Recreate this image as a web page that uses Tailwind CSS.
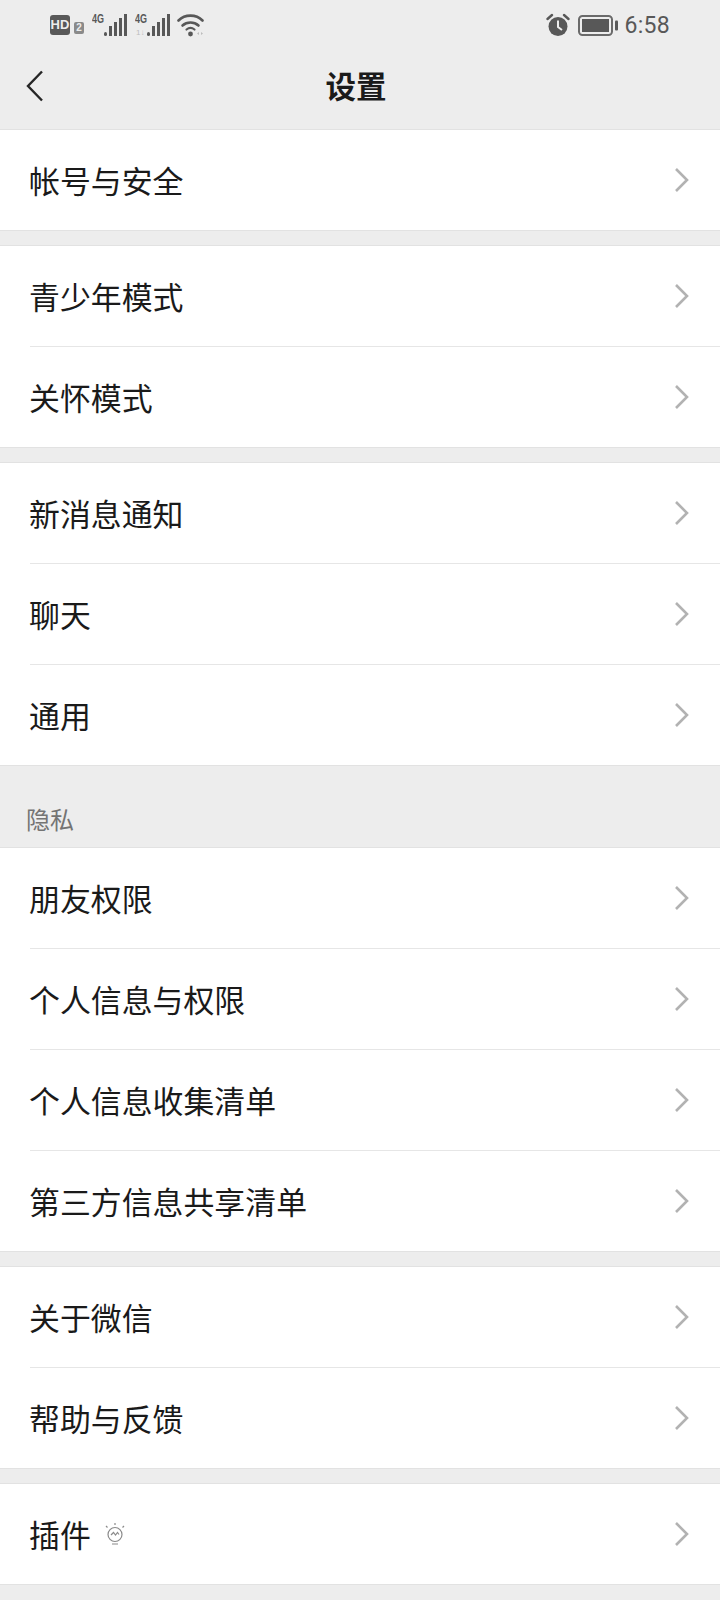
<!DOCTYPE html>
<html lang="zh-CN">
<head>
<meta charset="utf-8">
<script src="https://cdn.jsdelivr.net/npm/@tailwindcss/browser@4"></script>
<title>设置</title>
</head>
<body class="w-[720px] h-[1600px] overflow-hidden bg-[#ededed] font-['Noto_Sans_CJK_SC','Noto_Sans',sans-serif] text-[#1a1a1a]">
<!-- Status bar -->
<div class="h-[50px] flex items-center justify-between pl-[50px] pr-[50px] text-[#585858]">
  <div class="flex items-center">
    <span class="w-[20px] h-[20px] rounded-[3px] bg-[#585858] text-[#ededed] text-[13px] leading-[20px] font-bold text-center font-['Liberation_Sans']">HD</span>
    <span class="ml-[4px] mt-[6px] w-[10px] h-[12px] rounded-[2px] bg-[#8a8a8a] text-[#ededed] text-[10px] leading-[12px] font-bold text-center font-['Liberation_Sans']">2</span>
    <svg class="ml-[8px] -mt-[4px]" width="36" height="28" viewBox="0 -4 36 28" fill="#585858"><text x="0" y="10" font-family="Liberation Sans Narrow, Liberation Sans" font-size="13.5" font-weight="700" textLength="12" lengthAdjust="spacingAndGlyphs">4G</text><rect x="12" y="19" width="3" height="4" rx="1.5"/><rect x="17" y="13" width="3" height="10"/><rect x="22" y="9" width="3" height="14"/><rect x="27" y="5" width="3" height="18"/><rect x="32" y="1" width="3" height="22"/></svg>
    <svg class="ml-[7px] -mt-[4px]" width="36" height="28" viewBox="0 -4 36 28" fill="#585858"><text x="0" y="10" font-family="Liberation Sans Narrow, Liberation Sans" font-size="13.5" font-weight="700" textLength="12" lengthAdjust="spacingAndGlyphs">4G</text><text x="1" y="22" font-family="Liberation Sans" font-size="8" fill="#bdbdbd">1↓</text><rect x="12" y="19" width="3" height="4" rx="1.5"/><rect x="17" y="13" width="3" height="10"/><rect x="22" y="9" width="3" height="14"/><rect x="27" y="5" width="3" height="18"/><rect x="32" y="1" width="3" height="22"/></svg>
    <svg class="ml-[6px]" width="28" height="24" viewBox="0 0 28 24" fill="none" stroke="#585858" stroke-width="2.6" stroke-linecap="round"><path d="M1.5 7.5C8 1 19 1 25.5 7.5"/><path d="M5.5 12.5C10 8.5 17 8.5 21.5 12.5"/><path d="M9.5 16.5C12 14.5 15 14.5 17.5 16.5" stroke-width="2.2"/><circle cx="13.5" cy="21" r="2.4" fill="#585858" stroke="none"/><path d="M20 20.5l2-1.5v3zM24 19l2 1.5-2 1.5z" fill="#bdbdbd" stroke="none"/></svg>
  </div>
  <div class="flex items-center">
    <svg width="24" height="24" viewBox="0 0 24 24"><circle cx="12" cy="13.5" r="9.5" fill="#585858"/><path d="M12 7.5v6.5l4 3" fill="none" stroke="#ededed" stroke-width="2"/><path d="M1.5 6L6 2M22.5 6L18 2" stroke="#585858" stroke-width="2.4" stroke-linecap="round"/></svg>
    <svg class="ml-[8px]" width="40" height="21" viewBox="0 0 40 21"><rect x="1" y="1" width="33" height="19" rx="3.5" fill="none" stroke="#6a6a6a" stroke-width="2"/><rect x="4" y="4" width="27" height="13" fill="#585858"/><rect x="37" y="5.5" width="3" height="10" rx="1" fill="#585858"/></svg>
    <span class="ml-[6px] text-[23px] leading-none font-['Roboto'] tracking-[0.3px]">6:58</span>
  </div>
</div>
<!-- Nav bar -->
<header class="relative h-[80px] border-b border-[#e2e2e2] flex items-center justify-center">
  <svg class="absolute left-[26px] top-[20px]" width="18" height="32" viewBox="0 0 18 32" fill="none" stroke="#262626" stroke-width="2.4"><path d="M16 1.5L2 16l14 14.5"/></svg>
  <h1 class="text-[30.5px] leading-none font-bold -mt-[9px] -ml-[8px] text-[#1a1a1a]">设置</h1>
</header>
<main>
  <section class="bg-white border-b border-[#e2e2e2]">
    <a class="h-[100px] ml-[30px] pr-[30px] flex items-center justify-between text-[30.9px]"><span class="-ml-[1px]">帐号与安全</span><svg width="16" height="26" viewBox="0 0 16 26" fill="none" stroke="#b2b2b2" stroke-width="2.6"><path d="M2 2l11 11L2 24"/></svg></a>
  </section>
  <section class="mt-[14px] bg-white border-y border-[#e2e2e2] divide-y divide-[#e6e6e6]">
    <a class="h-[101px] ml-[30px] pr-[30px] flex items-center justify-between text-[30.9px]"><span class="-ml-[1px]">青少年模式</span><svg class="-mt-[1px]" width="16" height="26" viewBox="0 0 16 26" fill="none" stroke="#b2b2b2" stroke-width="2.6"><path d="M2 2l11 11L2 24"/></svg></a>
    <a class="h-[100px] ml-[30px] pr-[30px] flex items-center justify-between text-[30.9px]"><span class="-ml-[1px]">关怀模式</span><svg class="-mt-[1px]" width="16" height="26" viewBox="0 0 16 26" fill="none" stroke="#b2b2b2" stroke-width="2.6"><path d="M2 2l11 11L2 24"/></svg></a>
  </section>
  <section class="mt-[14px] bg-white border-y border-[#e2e2e2] divide-y divide-[#e6e6e6]">
    <a class="h-[101px] ml-[30px] pr-[30px] flex items-center justify-between text-[30.9px]"><span class="-ml-[1px]">新消息通知</span><svg class="-mt-[1px]" width="16" height="26" viewBox="0 0 16 26" fill="none" stroke="#b2b2b2" stroke-width="2.6"><path d="M2 2l11 11L2 24"/></svg></a>
    <a class="h-[101px] ml-[30px] pr-[30px] flex items-center justify-between text-[30.9px]"><span class="-ml-[1px]">聊天</span><svg class="-mt-[1px]" width="16" height="26" viewBox="0 0 16 26" fill="none" stroke="#b2b2b2" stroke-width="2.6"><path d="M2 2l11 11L2 24"/></svg></a>
    <a class="h-[100px] ml-[30px] pr-[30px] flex items-center justify-between text-[30.9px]"><span class="-ml-[1px]">通用</span><svg class="-mt-[1px]" width="16" height="26" viewBox="0 0 16 26" fill="none" stroke="#b2b2b2" stroke-width="2.6"><path d="M2 2l11 11L2 24"/></svg></a>
  </section>
  <p class="h-[81px] pl-[26px] pt-[37px] text-[24px] leading-[32px] text-[#747474]">隐私</p>
  <section class="bg-white border-y border-[#e2e2e2] divide-y divide-[#e6e6e6]">
    <a class="h-[101px] ml-[30px] pr-[30px] flex items-center justify-between text-[30.9px]"><span class="-ml-[1px]">朋友权限</span><svg class="-mt-[1px]" width="16" height="26" viewBox="0 0 16 26" fill="none" stroke="#b2b2b2" stroke-width="2.6"><path d="M2 2l11 11L2 24"/></svg></a>
    <a class="h-[101px] ml-[30px] pr-[30px] flex items-center justify-between text-[30.9px]"><span class="-ml-[1px]">个人信息与权限</span><svg class="-mt-[1px]" width="16" height="26" viewBox="0 0 16 26" fill="none" stroke="#b2b2b2" stroke-width="2.6"><path d="M2 2l11 11L2 24"/></svg></a>
    <a class="h-[101px] ml-[30px] pr-[30px] flex items-center justify-between text-[30.9px]"><span class="-ml-[1px]">个人信息收集清单</span><svg class="-mt-[1px]" width="16" height="26" viewBox="0 0 16 26" fill="none" stroke="#b2b2b2" stroke-width="2.6"><path d="M2 2l11 11L2 24"/></svg></a>
    <a class="h-[100px] ml-[30px] pr-[30px] flex items-center justify-between text-[30.9px]"><span class="-ml-[1px]">第三方信息共享清单</span><svg class="-mt-[1px]" width="16" height="26" viewBox="0 0 16 26" fill="none" stroke="#b2b2b2" stroke-width="2.6"><path d="M2 2l11 11L2 24"/></svg></a>
  </section>
  <section class="mt-[14px] bg-white border-y border-[#e2e2e2] divide-y divide-[#e6e6e6]">
    <a class="h-[101px] ml-[30px] pr-[30px] flex items-center justify-between text-[30.9px]"><span class="-ml-[1px]">关于微信</span><svg class="-mt-[1px]" width="16" height="26" viewBox="0 0 16 26" fill="none" stroke="#b2b2b2" stroke-width="2.6"><path d="M2 2l11 11L2 24"/></svg></a>
    <a class="h-[100px] ml-[30px] pr-[30px] flex items-center justify-between text-[30.9px]"><span class="-ml-[1px]">帮助与反馈</span><svg class="-mt-[1px]" width="16" height="26" viewBox="0 0 16 26" fill="none" stroke="#b2b2b2" stroke-width="2.6"><path d="M2 2l11 11L2 24"/></svg></a>
  </section>
  <section class="mt-[14px] bg-white border-y border-[#e2e2e2]">
    <a class="h-[100px] ml-[30px] pr-[30px] flex items-center justify-between text-[30.9px]">
      <span class="flex items-center -ml-[1px]">插件
        <svg class="ml-[13px] mt-[2px]" width="22" height="26" viewBox="0 0 22 26" fill="none" stroke="#8a8a8a" stroke-width="1.2"><circle cx="11" cy="12.5" r="7"/><path d="M7 13l2.5-2.5 2 2.5 2-2.5 1.5 2M8 22h6M11 1v2M2 4l1.5 1.5M20 4l-1.5 1.5"/></svg>
      </span>
      <svg class="-mt-[1px]" width="16" height="26" viewBox="0 0 16 26" fill="none" stroke="#b2b2b2" stroke-width="2.6"><path d="M2 2l11 11L2 24"/></svg>
    </a>
  </section>
</main>
</body>
</html>
